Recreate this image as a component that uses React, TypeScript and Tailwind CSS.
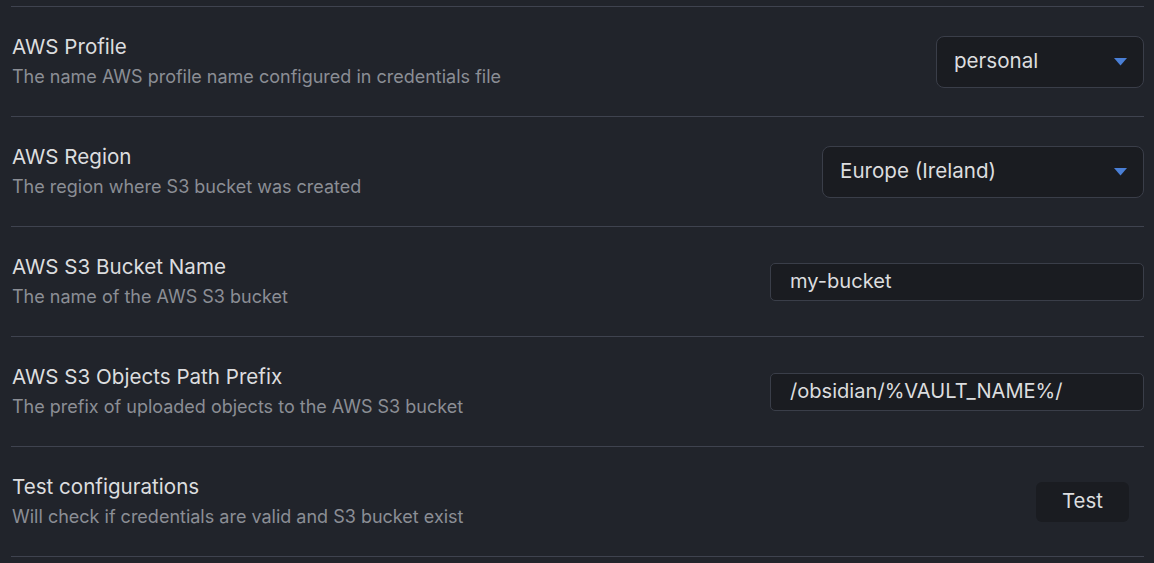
import React from "react";

function Caret() {
  return (
    <svg width="13" height="8" viewBox="0 0 13 8" className="shrink-0">
      <path d="M0 0 H13 L6.5 7.5 Z" fill="#4a7fd6" />
    </svg>
  );
}

function Row({ name, desc, children }: { name: string; desc: string; children: React.ReactNode }) {
  return (
    <div className="flex h-[110px] items-center border-t border-[#3f434f] pl-px pr-0">
      <div className="flex flex-1 flex-col">
        <div className="text-[20.6px] leading-[26px] text-[#dcdddf]">{name}</div>
        <div className="mt-[4px] text-[18px] leading-[26px] text-[#8b8e95]">{desc}</div>
      </div>
      {children}
    </div>
  );
}

function Select({ value, width }: { value: string; width: string }) {
  return (
    <div className={`flex h-[52px] items-center justify-between rounded-[8px] border border-[#3a3e49] bg-[#1a1c21] pl-[17px] pr-[16px] text-[20.6px] text-[#dcdddf] ${width}`}>
      <span>{value}</span>
      <Caret />
    </div>
  );
}

function Input({ value }: { value: string }) {
  return (
    <div className="flex h-[38px] w-[374px] items-center rounded-[5px] border border-[#3a3e49] bg-[#1a1c21] pl-[19px] text-[20.1px] text-[#dcdddf]">
      {value}
    </div>
  );
}

export default function App() {
  return (
    <div
      className="h-[563px] w-[1154px] overflow-hidden bg-[#21242b] pl-[11px] pr-[10px] pt-[6px]"
      style={{ fontFamily: "Inter, 'Noto Sans', sans-serif" }}
    >
      <Row name="AWS Profile" desc="The name AWS profile name configured in credentials file">
        <Select value="personal" width="w-[208px]" />
      </Row>
      <Row name="AWS Region" desc="The region where S3 bucket was created">
        <Select value="Europe (Ireland)" width="w-[322px]" />
      </Row>
      <Row name="AWS S3 Bucket Name" desc="The name of the AWS S3 bucket">
        <Input value="my-bucket" />
      </Row>
      <Row name="AWS S3 Objects Path Prefix" desc="The prefix of uploaded objects to the AWS S3 bucket">
        <Input value="/obsidian/%VAULT_NAME%/" />
      </Row>
      <Row name="Test configurations" desc="Will check if credentials are valid and S3 bucket exist">
        <div className="mr-[15px] flex h-[40px] w-[93px] items-center justify-center rounded-[6px] bg-[#1a1c21] text-[20.4px] text-[#dcdddf]">
          Test
        </div>
      </Row>
      <div className="border-t border-[#3f434f]" />
    </div>
  );
}
